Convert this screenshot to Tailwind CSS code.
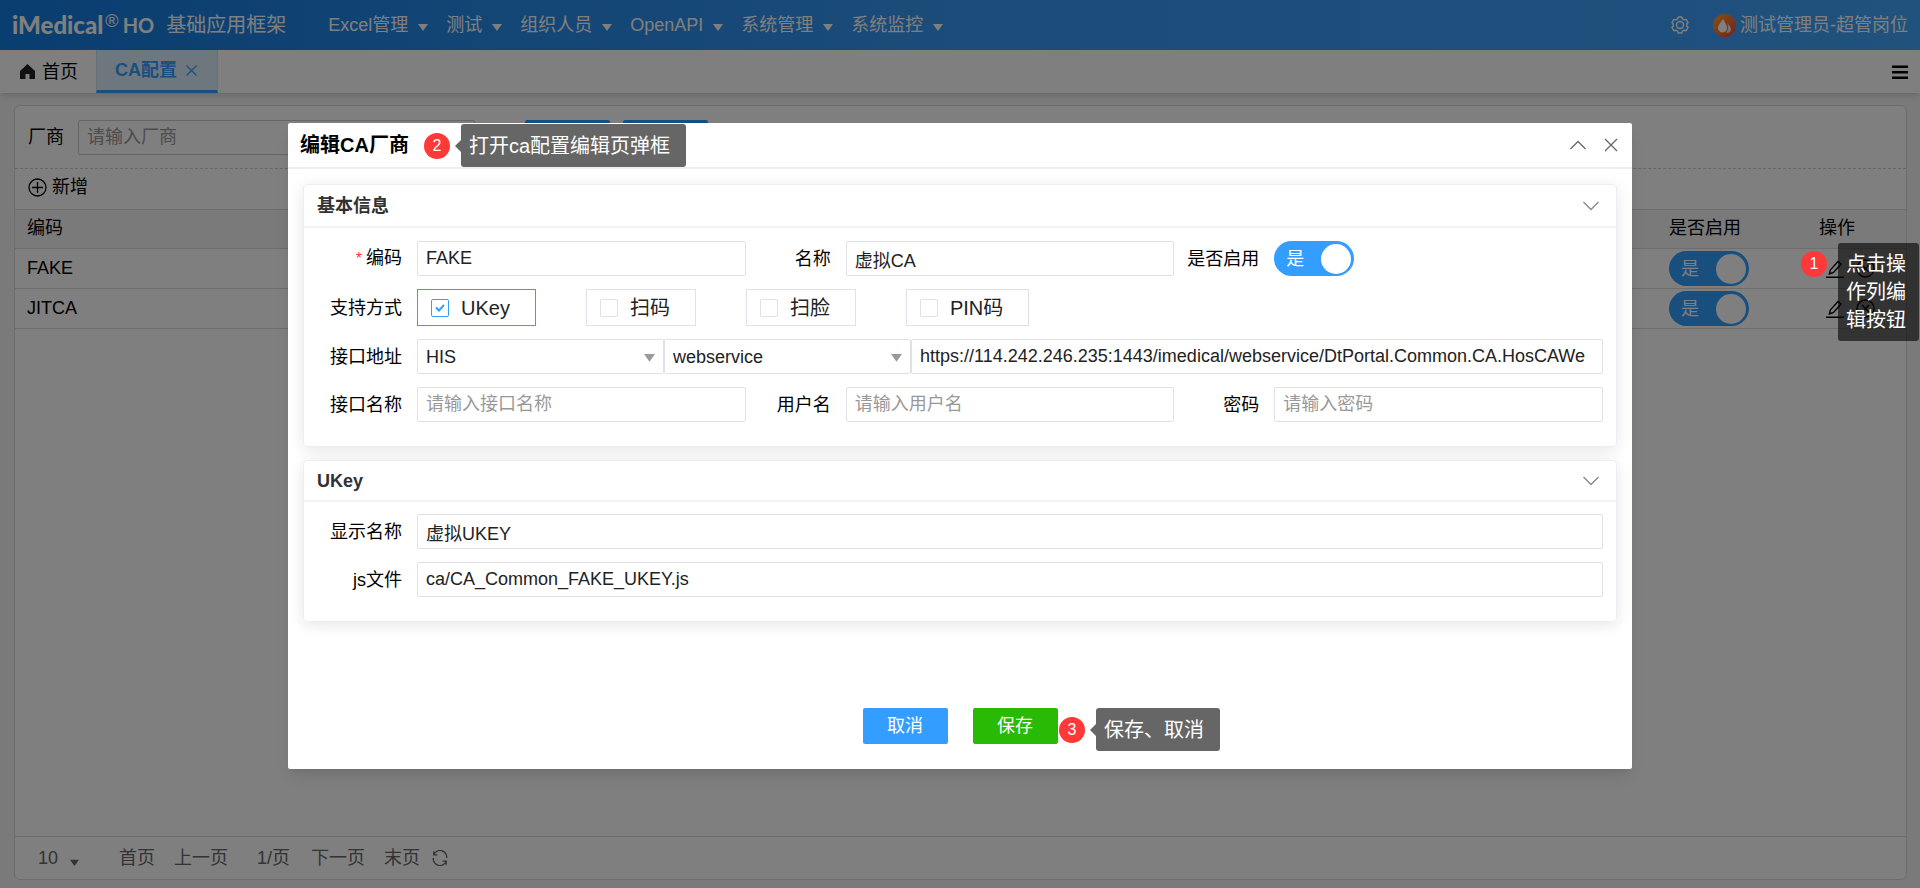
<!DOCTYPE html>
<html lang="zh-CN">
<head>
<meta charset="utf-8">
<title>CA配置</title>
<script src="https://cdn.jsdelivr.net/npm/@tailwindcss/browser@4"></script>
</head>
<body class="relative flex h-screen flex-col overflow-hidden bg-[#f5f5f5] font-['Liberation_Sans','Noto_Sans_CJK_SC',sans-serif] text-[18px] leading-6 text-black">
  <header class="flex h-[50px] shrink-0 items-center bg-linear-to-r from-[#127ce0] via-[#3698f4] to-[#42a4fc] pl-3 pr-3 text-white">
    <div class="flex items-center">
      <span class="font-['Lato','Noto_Sans_CJK_SC',sans-serif] text-[24px] font-black">iMedical</span>
      <span class="pb-2 pl-[2px] text-[18px]">®</span>
      <span class="pl-1 font-['Lato',sans-serif] text-[20px] font-bold">HO</span>
      <span class="pl-3 text-[20px]">基础应用框架</span>
    </div>
    <nav class="flex items-center gap-[18px] pl-[42px]">
      <a href="#" class="flex items-center gap-[10px]">Excel管理<svg class="mt-1 size-[10px]" viewBox="0 0 10 10" fill="currentColor"><path d="M0 2h10L5 9z"/></svg></a>
      <a href="#" class="flex items-center gap-[10px]">测试<svg class="mt-1 size-[10px]" viewBox="0 0 10 10" fill="currentColor"><path d="M0 2h10L5 9z"/></svg></a>
      <a href="#" class="flex items-center gap-[10px]">组织人员<svg class="mt-1 size-[10px]" viewBox="0 0 10 10" fill="currentColor"><path d="M0 2h10L5 9z"/></svg></a>
      <a href="#" class="flex items-center gap-[10px]">OpenAPI<svg class="mt-1 size-[10px]" viewBox="0 0 10 10" fill="currentColor"><path d="M0 2h10L5 9z"/></svg></a>
      <a href="#" class="flex items-center gap-[10px]">系统管理<svg class="mt-1 size-[10px]" viewBox="0 0 10 10" fill="currentColor"><path d="M0 2h10L5 9z"/></svg></a>
      <a href="#" class="flex items-center gap-[10px]">系统监控<svg class="mt-1 size-[10px]" viewBox="0 0 10 10" fill="currentColor"><path d="M0 2h10L5 9z"/></svg></a>
    </nav>
    <div class="ml-auto flex items-center">
      <button type="button" aria-label="设置" class="mr-6"><svg class="size-[18px]" viewBox="0 0 18 18" fill="none" stroke="currentColor" stroke-width="1.4" stroke-linejoin="round"><path d="M7.200 1h3.600l.7 1.900 1.700.9 2-.4 1.800 3.100-1.300 1.600v1.800l1.300 1.600-1.800 3.100-2-.4-1.700.9-.7 1.900H7.200l-.7-1.900-1.700-.9-2 .4L1 11.500l1.300-1.600V8.100L1 6.500l1.800-3.100 2 .4 1.700-.9z"/><circle cx="9" cy="9" r="3.500"/></svg></button>
      <svg class="mr-1 size-[23px]" viewBox="0 0 23 23"><defs><linearGradient id="av" x1="0" y1="0" x2="1" y2="1"><stop offset="0" stop-color="#ffa52c"/><stop offset="1" stop-color="#f0403e"/></linearGradient></defs><circle cx="11.500" cy="11.500" r="11.500" fill="url(#av)"/><path d="M10 5c2 3.500 4 6 4 9a4.500 4.500 0 0 1-9 0c0-3 3-5.500 5-9z" fill="#fff"/><path d="M14.500 9c1.500 2.500 3.500 4 3.500 6.500a3.500 3.500 0 0 1-5 3c2-2 2.500-5 1.500-9.500z" fill="#fff" opacity=".8"/></svg>
      <span>测试管理员-超管岗位</span>
    </div>
  </header>

  <div class="z-0 flex h-[43px] shrink-0 items-stretch bg-white pr-3 shadow-md">
    <a href="#" class="flex w-24 items-center gap-[7px] pl-5"><svg class="size-[15px]" viewBox="0 0 15 15" fill="#222"><path d="M7.500 0L0 7v8h5.500v-5h4v5H15V7z"/></svg>首页</a>
    <a href="#" class="flex w-[122px] items-center gap-[9px] border-x border-b-3 border-x-[#cfdcec] border-b-[#339eff] bg-[#dcecfc] pl-[18px] font-bold text-[#339eff]">CA配置<svg class="size-[11px]" viewBox="0 0 11 11" fill="none" stroke="currentColor" stroke-width="1.200"><path d="M.5.5l10 10M10.500.5l-10 10"/></svg></a>
    <button type="button" aria-label="菜单" class="ml-auto"><svg class="size-4" viewBox="0 0 16 16" fill="#000"><path d="M0 1.500h16v2.500H0zM0 7h16v2.500H0zM0 12.500h16V15H0z"/></svg></button>
  </div>

  <main class="mt-3 mr-[13px] mb-2 ml-[14px] flex min-h-0 flex-1 flex-col rounded-md border border-[#dadada] bg-white">
    <form class="flex h-[63px] shrink-0 items-center border-b border-dashed border-[#cfcfcf] pl-[13px]">
      <label for="q" class="w-[50px]">厂商</label>
      <input id="q" placeholder="请输入厂商" class="h-[35px] w-[397px] rounded-[2px] border border-[#ccc] px-2 placeholder:text-[#999]">
      <button type="button" aria-label="查询" class="ml-[50px] h-[35px] w-[85px] rounded-[2px] bg-[#339eff]"></button>
      <button type="button" aria-label="清屏" class="ml-[13px] h-[35px] w-[85px] rounded-[2px] bg-[#339eff]"></button>
    </form>
    <div class="flex h-10 items-center pb-1 pl-[13px]">
      <button type="button" class="flex items-center gap-[5px]"><svg class="size-[19px]" viewBox="0 0 19 19" fill="none" stroke="#000" stroke-width="1.300"><circle cx="9.500" cy="9.500" r="8.500"/><path d="M9.500 4v11M4 9.500h11"/></svg>新增</button>
    </div>
    <table class="w-full table-fixed border-collapse text-left">
      <thead>
        <tr class="h-[39px] border-y border-[#dadada] bg-[#f4f4f4]"><th class="pb-[2px] pl-3 font-normal">编码</th><th class="w-[135px] pb-[2px] font-normal">是否启用</th><th class="w-[102px] pb-[2px] pl-[15px] font-normal">操作</th></tr>
      </thead>
      <tbody>
        <tr class="h-10 border-b border-[#dadada]"><td class="pb-[2px] pl-3">FAKE</td>
          <td><label class="flex h-[35px] w-20 items-center justify-between rounded-full bg-[#339eff] pl-3 pr-[3px] text-white"><input type="checkbox" checked class="sr-only">是<span class="size-[30px] rounded-full bg-white"></span></label></td>
          <td class="pl-[22px]"><div class="flex items-center gap-3"><button type="button" aria-label="编辑"><svg class="size-[18px]" viewBox="0 0 18 18" fill="none" stroke="#000" stroke-width="1.400"><path d="M3.500 14l.8-4L12 1.500l3 2.500L7.500 12.500zM0 17.300h18"/></svg></button><button type="button" aria-label="删除"><svg class="size-[19px]" viewBox="0 0 19 19" fill="none" stroke="#000" stroke-width="1.300"><circle cx="9.500" cy="9.500" r="8.500"/><path d="M6 6l7 7M13 6l-7 7"/></svg></button></div></td></tr>
        <tr class="h-10 border-b border-[#dadada]"><td class="pb-[2px] pl-3">JITCA</td>
          <td><label class="flex h-[35px] w-20 items-center justify-between rounded-full bg-[#339eff] pl-3 pr-[3px] text-white"><input type="checkbox" checked class="sr-only">是<span class="size-[30px] rounded-full bg-white"></span></label></td>
          <td class="pl-[22px]"><div class="flex items-center gap-3"><button type="button" aria-label="编辑"><svg class="size-[18px]" viewBox="0 0 18 18" fill="none" stroke="#000" stroke-width="1.400"><path d="M3.500 14l.8-4L12 1.500l3 2.500L7.500 12.500zM0 17.300h18"/></svg></button><button type="button" aria-label="删除"><svg class="size-[19px]" viewBox="0 0 19 19" fill="none" stroke="#000" stroke-width="1.300"><circle cx="9.500" cy="9.500" r="8.500"/><path d="M6 6l7 7M13 6l-7 7"/></svg></button></div></td></tr>
      </tbody>
    </table>
    <footer class="mt-auto flex h-[43px] items-center border-t border-[#dadada] pl-[23px] text-[#666]">
      <button type="button" class="flex items-center gap-3">10<svg class="mt-2 size-[9px]" viewBox="0 0 10 10" fill="currentColor"><path d="M0 2h10L5 9z"/></svg></button>
      <button type="button" class="ml-[40px]">首页</button>
      <button type="button" class="ml-[19px]">上一页</button>
      <span class="ml-[29px]">1/页</span>
      <button type="button" class="ml-[21px]">下一页</button>
      <button type="button" class="ml-[19px]">末页</button>
      <button type="button" aria-label="刷新" class="ml-[12px]"><svg class="size-[16px]" viewBox="0 0 18 18" fill="none" stroke="currentColor" stroke-width="1.500"><path d="M2 5.500A7.500 7.500 0 0 1 16.500 9M16 12.500A7.500 7.500 0 0 1 1.500 9M2 1.500v4h4M16 16.500v-4h-4"/></svg></button>
    </footer>
  </main>

  <div class="absolute inset-0 flex flex-col items-center bg-black/50 pt-[123px]">
    <section role="dialog" aria-labelledby="dlg" class="flex h-[646px] w-[70%] flex-col rounded-[2px] bg-white shadow-lg">
      <div class="flex h-[46px] shrink-0 items-center border-b-2 border-[#efefef] pl-3 pr-[14px]">
        <h1 id="dlg" class="text-[20px] font-bold">编辑CA厂商</h1>
        <button type="button" aria-label="收起" class="ml-auto mr-[18px]"><svg class="size-4" viewBox="0 0 16 16" fill="none" stroke="#666" stroke-width="1.300"><path d="M.5 12L8 4.500l7.500 7.500"/></svg></button>
        <button type="button" aria-label="关闭"><svg class="size-[14px]" viewBox="0 0 14 14" fill="none" stroke="#666" stroke-width="1.300"><path d="M1 1l12 12M13 1L1 13"/></svg></button>
      </div>
      <div class="flex flex-col gap-[13px] px-[15px] pt-[15px]">
        <fieldset class="rounded-[4px] border border-[#ebeef5] bg-white shadow-[0_3px_15px_rgba(0,0,0,0.1)]">
          <div class="flex h-[43px] items-center justify-between border-b-2 border-[#f3f3fa] pl-[13px] pr-[17px]"><h2 class="font-bold text-[#303133]">基本信息</h2><svg class="size-4" viewBox="0 0 16 16" fill="none" stroke="#888" stroke-width="1.300"><path d="M.5 4L8 11.500 15.500 4"/></svg></div>
          <div class="flex flex-col gap-[13px] px-[13px] pt-[13px] pb-6">
            <div class="grid h-[35px] grid-cols-[100px_1fr_100px_1fr_100px_1fr] items-center">
              <label for="code" class="pr-[15px] text-right"><span class="mr-1 text-[16px] text-[#f33]">*</span>编码</label><input id="code" value="FAKE" class="h-[35px] w-full min-w-0 rounded-[2px] border border-[#dfe1ea] px-2 text-[#222]">
              <label for="name" class="pr-[15px] text-right">名称</label><input id="name" value="虚拟CA" class="h-[35px] w-full min-w-0 rounded-[2px] border border-[#dfe1ea] px-2 text-[#222]">
              <label for="on" class="pr-[15px] text-right whitespace-nowrap">是否启用</label><label class="flex h-[35px] w-20 items-center justify-between rounded-full bg-[#339eff] pl-3 pr-[3px] text-white"><input id="on" type="checkbox" checked class="sr-only">是<span class="size-[30px] rounded-full bg-white"></span></label>
            </div>
            <div class="flex h-[37px] items-center">
              <span class="w-[100px] pr-[15px] text-right">支持方式</span>
              <div class="flex gap-[50px] text-[20px] text-[#222]">
                <label class="flex h-[37px] items-center gap-3 border border-[#339eff] pr-[25px] pl-[13px]"><span class="relative flex"><input type="checkbox" checked class="size-[18px] appearance-none rounded-[2px] border border-[#339eff]"><svg class="pointer-events-none absolute inset-0 size-[18px]" viewBox="0 0 18 18" fill="none" stroke="#339eff" stroke-width="2"><path d="M5 8.500l3 3 5-5.500"/></svg></span>UKey</label>
                <label class="flex h-[37px] items-center gap-3 border border-[#dfe1ea] pr-[25px] pl-[13px]"><input type="checkbox" class="size-[18px] appearance-none rounded-[2px] border border-[#dfe1ea]">扫码</label>
                <label class="flex h-[37px] items-center gap-3 border border-[#dfe1ea] pr-[25px] pl-[13px]"><input type="checkbox" class="size-[18px] appearance-none rounded-[2px] border border-[#dfe1ea]">扫脸</label>
                <label class="flex h-[37px] items-center gap-3 border border-[#dfe1ea] pr-[25px] pl-[13px]"><input type="checkbox" class="size-[18px] appearance-none rounded-[2px] border border-[#dfe1ea]">PIN码</label>
              </div>
            </div>
            <div class="flex h-[35px] items-center">
              <label for="addr" class="w-[100px] pr-[15px] text-right">接口地址</label>
              <div class="relative w-[247px]"><select aria-label="系统" class="h-[35px] w-full appearance-none rounded-[2px] border border-[#dfe1ea] px-2 text-[#222]"><option>HIS</option></select><svg class="pointer-events-none absolute top-[14px] right-[9px] size-[11px]" viewBox="0 0 10 10" fill="#999"><path d="M0 1h10L5 8z"/></svg></div>
              <div class="relative w-[247px]"><select aria-label="类型" class="h-[35px] w-full appearance-none rounded-[2px] border border-[#dfe1ea] px-2 text-[#222]"><option>webservice</option></select><svg class="pointer-events-none absolute top-[14px] right-[9px] size-[11px]" viewBox="0 0 10 10" fill="#999"><path d="M0 1h10L5 8z"/></svg></div>
              <input id="addr" value="https://114.242.246.235:1443/imedical/webservice/DtPortal.Common.CA.HosCAWe" class="h-[35px] min-w-0 flex-1 rounded-[2px] border border-[#dfe1ea] px-2 text-[#222]">
            </div>
            <div class="grid h-[35px] grid-cols-[100px_1fr_100px_1fr_100px_1fr] items-center">
              <label for="iname" class="pr-[15px] text-right">接口名称</label><input id="iname" placeholder="请输入接口名称" class="h-[35px] w-full min-w-0 rounded-[2px] border border-[#dfe1ea] px-2 placeholder:text-[#999]">
              <label for="user" class="pr-[15px] text-right">用户名</label><input id="user" placeholder="请输入用户名" class="h-[35px] w-full min-w-0 rounded-[2px] border border-[#dfe1ea] px-2 placeholder:text-[#999]">
              <label for="pwd" class="pr-[15px] text-right">密码</label><input id="pwd" type="password" placeholder="请输入密码" class="h-[35px] w-full min-w-0 rounded-[2px] border border-[#dfe1ea] px-2 placeholder:text-[#999]">
            </div>
          </div>
        </fieldset>
        <fieldset class="rounded-[4px] border border-[#ebeef5] bg-white shadow-[0_3px_15px_rgba(0,0,0,0.1)]">
          <div class="flex h-[41px] items-center justify-between border-b-2 border-[#f3f3fa] pl-[13px] pr-[17px]"><h2 class="font-bold text-[#303133]">UKey</h2><svg class="size-4" viewBox="0 0 16 16" fill="none" stroke="#888" stroke-width="1.300"><path d="M.5 4L8 11.500 15.500 4"/></svg></div>
          <div class="grid grid-cols-[100px_1fr] items-center gap-y-[13px] px-[13px] pt-3 pb-6">
            <label for="show" class="pr-[15px] text-right">显示名称</label><input id="show" value="虚拟UKEY" class="h-[35px] rounded-[2px] border border-[#dfe1ea] px-2 text-[#222]">
            <label for="js" class="pr-[15px] text-right">js文件</label><input id="js" value="ca/CA_Common_FAKE_UKEY.js" class="h-[35px] rounded-[2px] border border-[#dfe1ea] px-2 text-[#222]">
          </div>
        </fieldset>
      </div>
      <div class="mt-auto mb-[25px] flex justify-center gap-[25px] text-white">
        <button type="button" class="h-[36px] w-[85px] rounded-[2px] bg-[#339eff]">取消</button>
        <button type="button" class="h-[36px] w-[85px] rounded-[2px] bg-[#28ba05]">保存</button>
      </div>
    </section>
  </div>

  <div class="absolute top-[124px] left-[424px] flex items-center text-white">
    <span class="flex size-[26px] items-center justify-center rounded-full bg-[#ff3838] text-[16px]">2</span>
    <svg class="ml-[5px] h-3 w-[6px]" viewBox="0 0 6 12" fill="#666"><path d="M6 0v12L0 6z"/></svg>
    <span class="flex h-[43px] items-center rounded-[3px] bg-[#666] px-2 pr-4 text-[20px]">打开ca配置编辑页弹框</span>
  </div>
  <div class="absolute top-[708px] left-[1059px] flex items-center text-white">
    <span class="flex size-[26px] items-center justify-center rounded-full bg-[#ff3838] text-[16px]">3</span>
    <svg class="ml-[5px] h-3 w-[6px]" viewBox="0 0 6 12" fill="#666"><path d="M6 0v12L0 6z"/></svg>
    <span class="flex h-[43px] items-center rounded-[3px] bg-[#666] px-2 pr-4 text-[20px]">保存、取消</span>
  </div>
  <span class="absolute top-[251px] right-[93px] flex size-[26px] items-center justify-center rounded-full bg-[#ff3838] text-[16px] text-white">1</span>
  <p class="absolute top-[243px] right-px w-[81px] rounded-[3px] bg-black/60 px-2 py-[7px] text-[20px] leading-7 text-white">点击操作列编辑按钮</p>
</body>
</html>
